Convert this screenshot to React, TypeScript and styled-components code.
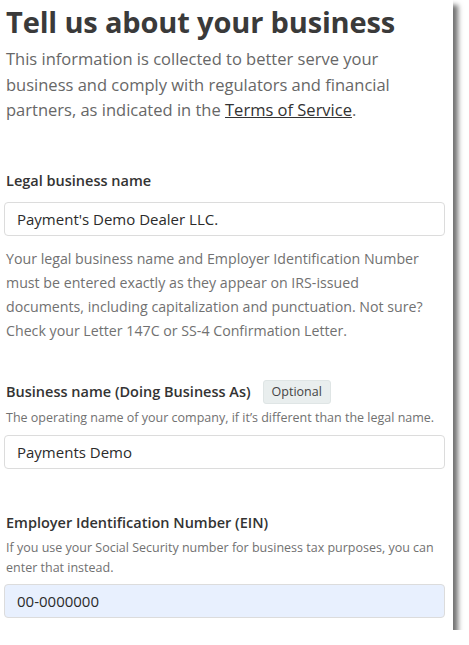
import React from "react";
import styled, { createGlobalStyle } from "styled-components";

const GlobalStyle = createGlobalStyle`
    body {
        margin: 0;
        background: #ffffff;
        font-family: "Open Sans", "Noto Sans", sans-serif;
    }
`;

const Card = styled.div`
    width: 453px;
    height: 630px;
    box-sizing: border-box;
    background: #ffffff;
    box-shadow: 5px 5px 5px rgba(0, 0, 0, 0.55);
    padding: 0 8px 0 4px;
    overflow: hidden;
`;

const Title = styled.h1`
    margin: 0;
    padding: 2px 0 0 2px;
    font-size: 29px;
    line-height: 40px;
    font-weight: 700;
    color: #3a3a3a;
    letter-spacing: -0.15px;
`;

const Intro = styled.p`
    margin: 4px 0 0;
    padding-left: 2px;
    font-size: 16.5px;
    line-height: 25.5px;
    color: #676767;
    a {
        color: #333;
        text-decoration: underline;
    }
`;

const Field = styled.div<{ $gap: number }>`
    margin-top: ${(p) => p.$gap}px;
`;

const LabelRow = styled.div`
    display: flex;
    align-items: center;
    gap: 12px;
    padding-left: 2px;
`;

const Label = styled.label`
    font-size: 14.5px;
    font-weight: 600;
    color: #333;
    line-height: 24px;
`;

const Badge = styled.span`
    font-size: 12.5px;
    color: #444;
    background: #e9eeee;
    border: 1px solid #dfe5e5;
    border-radius: 3px;
    padding: 1px 8px;
    line-height: 20px;
`;

const Hint = styled.p<{ $size: number; $lh: number; $top: number; $max?: number }>`
    margin: ${(p) => p.$top}px 0 0;
    padding-left: 2px;
    max-width: ${(p) => (p.$max ? `${p.$max}px` : "none")};
    font-size: ${(p) => p.$size}px;
    line-height: ${(p) => p.$lh}px;
    color: #717171;
`;

const Input = styled.input<{ $filled?: boolean; $top: number }>`
    display: block;
    width: 100%;
    height: 34px;
    box-sizing: border-box;
    margin: ${(p) => p.$top}px 0 0;
    padding: 0 12px;
    border: 1px solid #dcdcdc;
    border-radius: 4px;
    background: ${(p) => (p.$filled ? "#e8f0fe" : "#ffffff")};
    font-family: inherit;
    font-size: 15px;
    color: #2b2b2b;
    outline: none;
`;

export default function App() {
    return (
        <>
            <GlobalStyle />
            <Card>
                <Title>Tell us about your business</Title>
                <Intro>
                    This information is collected to better serve your business and
                    comply with regulators and financial partners, as indicated in the{" "}
                    <a>Terms of Service</a>.
                </Intro>

                <Field $gap={46}>
                    <LabelRow>
                        <Label>Legal business name</Label>
                    </LabelRow>
                    <Input $top={9} defaultValue="Payment's Demo Dealer LLC." />
                    <Hint $size={14.2} $lh={24} $top={11} $max={430}>
                        Your legal business name and Employer Identification Number must
                        be entered exactly as they appear on IRS-issued documents,
                        including capitalization and punctuation. Not sure? Check your
                        Letter 147C or SS-4 Confirmation Letter.
                    </Hint>
                </Field>

                <Field $gap={37}>
                    <LabelRow>
                        <Label>Business name (Doing Business As)</Label>
                        <Badge>Optional</Badge>
                    </LabelRow>
                    <Hint $size={12.5} $lh={22} $top={3}>
                        The operating name of your company, if it’s different than the
                        legal name.
                    </Hint>
                    <Input $top={6} defaultValue="Payments Demo" />
                </Field>

                <Field $gap={42}>
                    <LabelRow>
                        <Label>Employer Identification Number (EIN)</Label>
                    </LabelRow>
                    <Hint $size={12.5} $lh={20} $top={3}>
                        If you use your Social Security number for business tax purposes,
                        you can enter that instead.
                    </Hint>
                    <Input $top={6} $filled defaultValue="00-0000000" />
                </Field>
            </Card>
        </>
    );
}
